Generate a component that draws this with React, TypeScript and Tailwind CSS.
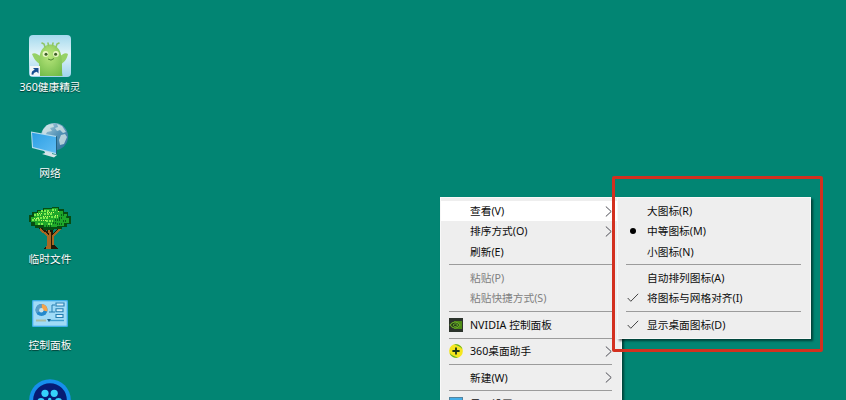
import type { ReactNode } from 'react';
import clsx from 'clsx';

function SpriteIcon() {
  return (
    <svg viewBox="0 0 42 42" className="h-[42px] w-[42px]">
      <defs>
        <linearGradient id="sky" x1="0" y1="0" x2="0" y2="1">
          <stop offset="0" stopColor="#a4d9ee" />
          <stop offset="0.45" stopColor="#e0f3f8" />
          <stop offset="1" stopColor="#a0d4ee" />
        </linearGradient>
        <radialGradient id="body" cx="0.45" cy="0.35" r="0.75">
          <stop offset="0" stopColor="#b9e67c" />
          <stop offset="1" stopColor="#72bb49" />
        </radialGradient>
      </defs>
      <rect width="42" height="42" rx="4" fill="url(#sky)" />
      <path d="M3 19c3-2 6 1 10 3v8C8 28 5 24 3 19zM39 19c-3-2-6 1-9 3v8c5-2 8-6 9-11z" fill="#96d166" />
      <path d="M9.5 41c1-4 0-10 1-18C11.500 5 31.500 5 32.500 23c1 8 0 14 1 18z" fill="url(#body)" />
      <path d="M16 12l-1-3-2-1M19.500 10.500L19 8M23.500 10.500L24 8M27 12l1-3 2-1" stroke="#8fc566" strokeWidth="1.600" strokeLinecap="round" fill="none" />
      <circle cx="16.500" cy="19" r="2.900" fill="#eaf7c4" />
      <circle cx="27" cy="19" r="2.900" fill="#eaf7c4" />
      <circle cx="17" cy="19.300" r="1.500" fill="#3c5f27" />
      <circle cx="26.600" cy="19.300" r="1.500" fill="#3c5f27" />
      <path d="M19 24q3 2.500 6-.5" stroke="#4d852e" fill="none" strokeWidth="1" />
      <path d="M1 31h10v10H1z" fill="#f0f5f7" />
      <path d="M2.500 39.500c0-3 1-4 3.200-4.800L4 33h5.500v5.500L7.800 36.700c-2.200.4-3.200 1.300-3.500 3z" fill="#174d8f" />
    </svg>
  );
}

function NetworkIcon() {
  return (
    <svg viewBox="0 0 42 42" className="h-[42px] w-[42px]">
      <defs>
        <linearGradient id="globe" x1="0" y1="0" x2="1" y2="1">
          <stop offset="0" stopColor="#c0dce6" />
          <stop offset="0.5" stopColor="#5795b8" />
          <stop offset="1" stopColor="#2b6c98" />
        </linearGradient>
        <linearGradient id="screen" x1="0" y1="0" x2="1" y2="1">
          <stop offset="0" stopColor="#2c9fe4" />
          <stop offset="1" stopColor="#5fbcf3" />
        </linearGradient>
      </defs>
      <circle cx="25.5" cy="15.6" r="13.6" fill="url(#globe)" />
      <path d="M14 9l4-5 6-1 1 3-4 1 2 3-5 1-2 4-3-2zM28 3l5 2 4 6-3 1-3-3-3 1-2-3 3-1zM32 14l4-1 2 3-3 7-4 1-1-5z" fill="#d8e8e8" opacity=".75" />
      <path d="M15 29l8 2v2l5 1-3 2.500-12-3.500 3-1z" fill="#d7e3e7" />
      <path d="M2 10.500l26 4.500v18.500L3 27z" fill="#b5dced" />
      <path d="M3 11.800L27 16v16L4 26z" fill="url(#screen)" />
      <path d="M27 15l1 .2v18.300l-1-.5z" fill="#226080" />
    </svg>
  );
}

function TreeIcon() {
  return (
    <svg viewBox="0 0 42 44" className="h-[44px] w-[42px]" shapeRendering="crispEdges">
      <path d="M9 22h5l4 4v-5h6v6l5-5h4l-8 9v8l4 4H15l3-4v-9z" fill="#241705" />
      <path d="M11 23l8 7v9l-1 3h3V28l-2-6M31 23l-7 7v9" fill="none" stroke="#a76824" strokeWidth="2" />
      <path d="M8 4h6V2h9V1h7v2h5v3h4v4h3v8h-4v3h-5v2h-8v1H14v-2H6v-2H2v-4H0V9h3V6h5z" fill="#064e12" />
      <path d="M9 5h6V3h8V2h6v3h5v3h4v4h2v5h-5v3h-7v1H15v-2H6v-3H2v-5h3V7h4z" fill="#1fa82a" />
      <path d="M5 9h7M12 5h9M15 8h9M23 4h4M8 12h12M3 14h8M17 15h7M9 18h6M22 11h7M19 18h4" stroke="#7cec4e" strokeWidth="2" strokeDasharray="2 1" />
      <path d="M8 7h6M14 10h8M5 12h6M18 6h8M12 14h6M26 9h4M29 5h2" stroke="#d2f56a" strokeWidth="1" strokeDasharray="1 1" />
      <path d="M26 14h5M32 9h4M28 18h5M34 15h4M24 17h3M30 12h4M37 11h2M17 20h5" stroke="#08621a" strokeWidth="2" strokeDasharray="1 1" />
    </svg>
  );
}

function ControlPanelIcon() {
  return (
    <svg viewBox="0 0 36 27" className="h-[27px] w-9">
      <rect width="36" height="27" rx="1.2" fill="#3eaee9" />
      <rect x="1.3" y="1.3" width="33.4" height="24.4" fill="#a0dbf7" />
      <circle cx="9.5" cy="10" r="6" fill="#2389cc" />
      <path d="M9.5 10V4a6 6 0 0 1 5.8 7.5z" fill="#f6a44a" />
      <path d="M9.5 10V4a6 6 0 0 0-5 9.2z" fill="#5a9fc9" />
      <circle cx="9.3" cy="10.2" r="2.2" fill="#c9e4ec" />
      <path d="M17 12h3V5h3M20 12h3" fill="none" stroke="#247daf" />
      <path d="M24 3h8v3h-8zM24 8.7h7v3h-7zM24 14.5h7v3h-7z" fill="#d5effb" stroke="#247eb1" strokeWidth="1.1" />
      <path d="M4 20.500h10" stroke="#a9bda4" strokeWidth="2" />
      <path d="M16 20.500h16" stroke="#3d9ed0" strokeWidth="1.4" />
      <path d="M15 19h4l-2 3z" fill="#16608e" />
    </svg>
  );
}

function FilmIcon() {
  return (
    <svg viewBox="0 0 42 42" className="h-[42px] w-[42px]">
      <circle cx="21" cy="21" r="20.8" fill="#168fed" />
      <circle cx="21" cy="21" r="16.8" fill="#071c75" />
      <g fill="#35d2fc">
        <circle cx="16" cy="14.3" r="3.6" />
        <circle cx="25.2" cy="14.3" r="3.6" />
        <circle cx="12" cy="22.5" r="3.6" />
        <circle cx="29.5" cy="22.5" r="3.6" />
        <circle cx="20.7" cy="20.5" r="1.7" />
        <circle cx="21" cy="30" r="3.6" />
      </g>
    </svg>
  );
}

function NvidiaIcon() {
  return (
    <svg viewBox="0 0 14 14" className="h-3.5 w-3.5">
      <rect width="14" height="14" fill="#2b332b" />
      <path d="M5 3h8v8H5z" fill="#4d8b16" />
      <path d="M1 7c3-4 7-4 10 0-3 4-7 4-10 0z" fill="#233a18" stroke="#6aad28" strokeWidth="1.1" />
      <path d="M4 7c2-2 4-1 5 0-2 2-4 2-5 0z" fill="none" stroke="#73b731" />
    </svg>
  );
}

function AssistantIcon() {
  return (
    <svg viewBox="0 0 14 14" className="h-3.5 w-3.5">
      <circle cx="7" cy="7" r="6.9" fill="#f5e61e" />
      <path d="M5 .5a6.800 6.800 0 0 1 8.500 5C11.500 2.500 8.500 1.500 5 .5zM9 13.500a6.800 6.800 0 0 1-8.500-5c2 3 5 4 8.500 5z" fill="#4aad34" />
      <path d="M7 3.4v7.2M3.4 7h7.2" stroke="#1a351a" strokeWidth="1.8" />
    </svg>
  );
}

function DisplayIcon() {
  return (
    <svg viewBox="0 0 14 14" className="h-3.5 w-3.5">
      <rect width="14" height="11" fill="#54849e" />
      <rect x="1" y="1" width="12" height="9" fill="#43aee8" />
    </svg>
  );
}

const check = (
  <svg viewBox="0 0 12 10" className="h-2.5 w-3">
    <path d="M.7 5l3.1 3.3L11.2.8" fill="none" stroke="#444" strokeWidth="1" />
  </svg>
);

const dot = <span className="ml-px h-[6px] w-[6px] rounded-full bg-black" />;

interface Entry {
  label?: string;
  icon?: ReactNode;
  arrow?: boolean;
  active?: boolean;
  disabled?: boolean;
}

const LIST_Desktop = [
  { label: '360健康精灵', icon: <SpriteIcon /> },
  { label: '网络', icon: <NetworkIcon /> },
  { label: '临时文件', icon: <TreeIcon /> },
  { label: '控制面板', icon: <ControlPanelIcon /> },
  { label: '', icon: <FilmIcon /> },
];

// an entry without a label is a separator
const LIST_Menu: Entry[] = [
  { label: '查看(V)', arrow: true, active: true },
  { label: '排序方式(O)', arrow: true },
  { label: '刷新(E)' },
  {},
  { label: '粘贴(P)', disabled: true },
  { label: '粘贴快捷方式(S)', disabled: true },
  {},
  { label: 'NVIDIA 控制面板', icon: <NvidiaIcon /> },
  {},
  { label: '360桌面助手', icon: <AssistantIcon />, arrow: true },
  {},
  { label: '新建(W)', arrow: true },
  {},
  { label: '显示设置(D)', icon: <DisplayIcon /> },
];

const LIST_View: Entry[] = [
  { label: '大图标(R)' },
  { label: '中等图标(M)', icon: dot },
  { label: '小图标(N)' },
  {},
  { label: '自动排列图标(A)' },
  { label: '将图标与网格对齐(I)', icon: check },
  {},
  { label: '显示桌面图标(D)', icon: check },
];

function Menu({ list, className }: { list: Entry[]; className: string }) {
  return (
    <div
      className={clsx(
        'absolute border border-[#f8f8f8] bg-[#eeeeee] py-[3px]',
        'shadow-[2px_2px_2px_rgba(0,0,0,0.5)]',
        className
      )}
    >
      {list.map((item, i) =>
        item.label ? (
          <div
            key={i}
            className={clsx(
              'flex h-[20.3px] items-center pr-[9px]',
              item.active && 'bg-white',
              item.disabled ? 'text-[#808080]' : 'text-[#0c0c0c]'
            )}
          >
            <span className="flex w-[29px] items-center justify-center">{item.icon}</span>
            <span className="flex-1 whitespace-pre">{item.label}</span>
            {item.arrow && (
              <svg viewBox="0 0 7 11" className="h-[11px] w-[7px]">
                <path d="M.8.5l5.4 5-5.4 5" fill="none" stroke="#4d4d55" strokeWidth="1" />
              </svg>
            )}
          </div>
        ) : (
          <div key={i} className="flex h-[6.1px] items-center pr-[9px] pl-2">
            <div className="h-px w-full bg-[#9b9b9b]" />
          </div>
        )
      )}
    </div>
  );
}

export default function App() {
  return (
    <div className="relative h-[400px] w-[846px] overflow-hidden bg-[#028573] font-['Noto_Sans','Noto_Sans_CJK_SC',sans-serif] text-[10.7px] leading-4">
      <div className="flex w-[100px] flex-col pt-[33px]">
        {LIST_Desktop.map((item, i) => (
          <div key={i} className="flex h-[86px] shrink-0 flex-col items-center">
            <div className="mb-px flex h-[45px] items-center justify-center">{item.icon}</div>
            <span className="whitespace-nowrap text-white [text-shadow:0_1px_1px_rgba(0,0,0,0.6)]">
              {item.label}
            </span>
          </div>
        ))}
      </div>

      <Menu list={LIST_Menu} className="top-[197px] left-[440px] w-[182px]" />
      <Menu list={LIST_View} className="top-[197px] left-[617px] w-[194px]" />

      <div className="absolute top-[176px] left-[612px] h-[176px] w-[211px] rounded-[2px] border-3 border-[#d3301f]" />
    </div>
  );
}
